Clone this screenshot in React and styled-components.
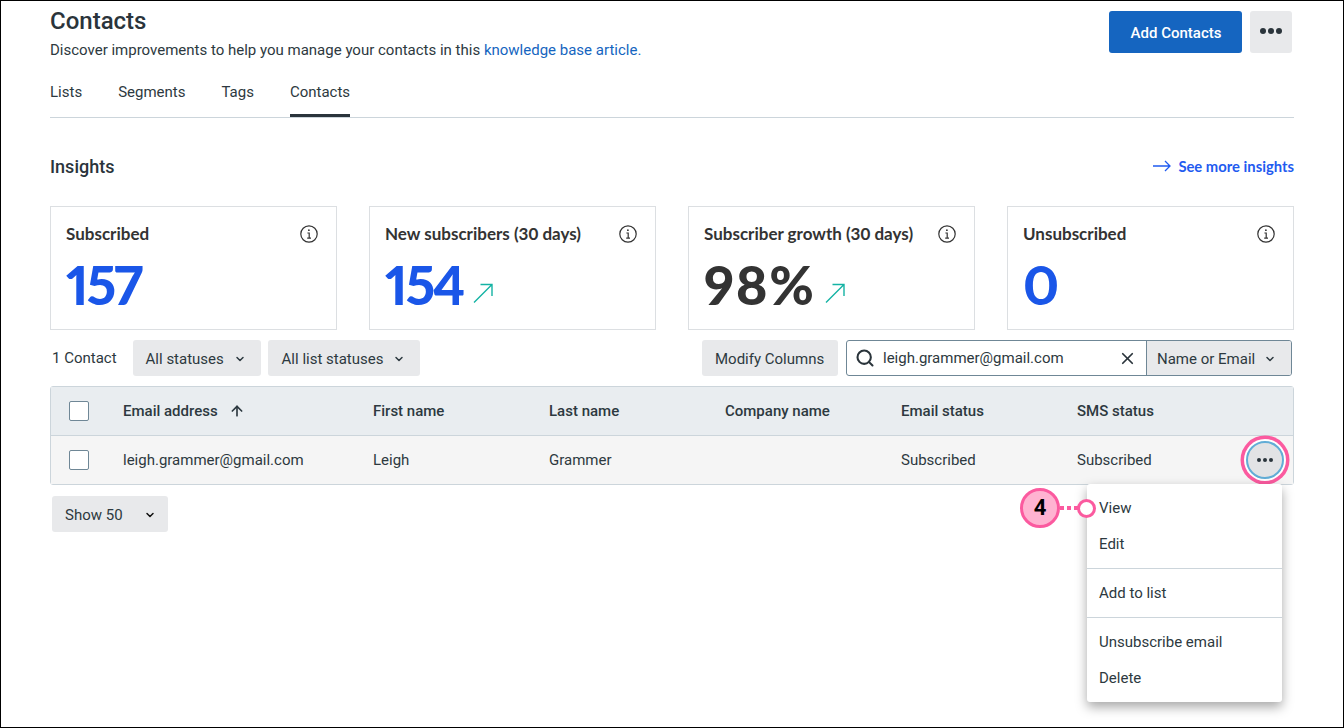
import styled, { createGlobalStyle } from 'styled-components';
import { ChevronDown, Search, X, ArrowUp } from 'lucide-react';

const GlobalStyle = createGlobalStyle`
  html, body {
    margin: 0;
    padding: 0;
    background: #fff;
  }
  body {
    font-family: Roboto, "Liberation Sans", sans-serif;
    color: #2d3940;
  }
  * {
    box-sizing: border-box;
  }
`;

const Frame = styled.div`
  width: 1344px;
  height: 728px;
  border: 1px solid #000;
  padding: 0 49px;
  overflow: hidden;
`;

const TopRow = styled.header`
  display: flex;
  justify-content: space-between;
  align-items: flex-start;
  padding-right: 2px;
`;

const TitleBlock = styled.div`
  padding-top: 6px;
`;

const Title = styled.h1`
  margin: 0;
  font-size: 24px;
  line-height: 28px;
  font-weight: 500;
  color: #2a343b;
`;

const Subtitle = styled.p`
  margin: 5px 0 0;
  font-size: 15px;
  line-height: 20px;

  > a {
    color: #1565c0;
    text-decoration: none;
  }
`;

const TopActions = styled.div`
  display: flex;
  gap: 8px;
  margin-top: 10px;
`;

const PrimaryButton = styled.button`
  width: 133px;
  height: 42px;
  padding: 2px 0 0 1px;
  border: none;
  border-radius: 3px;
  background: #1565c0;
  color: #fff;
  font: 500 15px Roboto, sans-serif;
`;

const MoreButton = styled.button`
  width: 42px;
  height: 42px;
  border: none;
  border-radius: 3px;
  background: #e8e9eb;
  display: flex;
  align-items: center;
  justify-content: center;
  padding: 0 0 2px;
`;

const Tabs = styled.nav`
  display: flex;
  gap: 36px;
  margin-top: 16px;
  border-bottom: 1px solid #ccd5db;
`;

const Tab = styled.a`
  font-size: 15px;
  line-height: 30px;
  padding: 1px 0 7px;
  border-bottom: 3px solid ${(p) => (p.$active ? '#2a343b' : 'transparent')};
`;

const InsightsHead = styled.div`
  display: flex;
  justify-content: space-between;
  align-items: center;
  margin-top: 37px;
  height: 24px;
`;

const SectionTitle = styled.h2`
  margin: 0;
  font-size: 18px;
  line-height: 24px;
  font-weight: 500;
  color: #2a343b;
`;

const SeeMore = styled.a`
  display: flex;
  align-items: center;
  gap: 7px;
  margin-top: -3px;
  font: 700 14.8px Lato, sans-serif;
  color: #1f5bf0;
`;

const Cards = styled.section`
  display: grid;
  grid-template-columns: repeat(4, 287px);
  gap: 32px;
  margin-top: 27px;
`;

const Card = styled.div`
  height: 124px;
  border: 1px solid #dcdfe2;
  padding: 15px 18px 0 15px;
  font-family: Lato, sans-serif;
  color: #333;
`;

const CardHead = styled.div`
  display: flex;
  justify-content: space-between;
  align-items: center;
  height: 24px;
  font-size: 17px;
  font-weight: 700;

  > span {
    margin-top: -2px;
  }
`;

const CardValue = styled.div`
  display: flex;
  align-items: flex-end;
  gap: 10px;
  margin-top: 9px;
  font-size: 54px;
  line-height: 60px;
  font-weight: 900;
  font-variant-numeric: proportional-nums;
  letter-spacing: ${(p) => (p.$dark ? '1.6px' : '-2.2px')};
  color: ${(p) => (p.$dark ? '#333' : '#1a56e8')};

  > svg {
    margin-bottom: 12px;
  }
`;

const Toolbar = styled.div`
  display: flex;
  align-items: center;
  margin-top: 10px;
  padding: 0 2px;
  height: 36px;
`;

const Count = styled.span`
  font-size: 15px;
  margin-right: 16px;
`;

const GreyButton = styled.button`
  display: flex;
  align-items: center;
  justify-content: space-between;
  width: ${(p) => p.$width}px;
  height: 36px;
  margin-right: ${(p) => p.$gap || 0}px;
  padding: 1px ${(p) => p.$right || 14}px 0 ${(p) => p.$left || 14}px;
  border: none;
  border-radius: 3px;
  background: #e8e9eb;
  color: #2d3940;
  font: 400 15px Roboto, sans-serif;
  white-space: nowrap;
`;

const Spacer = styled.div`
  flex: 1;
`;

const SearchGroup = styled.div`
  display: flex;
  width: 446px;
  height: 36px;
  border: 1px solid #6f8796;
  border-radius: 3px;
  overflow: hidden;
`;

const SearchField = styled.div`
  display: flex;
  align-items: center;
  width: 299px;
  padding: 0 9px 0 8px;
  font-size: 15px;

  > span {
    flex: 1;
    margin-left: 8px;
  }
`;

const SearchType = styled.div`
  flex: 1;
  display: flex;
  align-items: center;
  justify-content: space-between;
  padding: 1px 15px 0 10px;
  background: #e8e9eb;
  border-left: 1px solid #6f8796;
  font-size: 15px;
`;

const Table = styled.div`
  position: relative;
  margin-top: 10px;
  border: 1px solid #ccd5db;
  border-radius: 3px;
`;

const Row = styled.div`
  display: grid;
  grid-template-columns: 72px 250px 176px 176px 176px 176px 1fr;
  align-items: center;
  font-size: 15px;
  font-weight: ${(p) => (p.$head ? 500 : 400)};
  background: ${(p) => (p.$head ? '#e9edf0' : '#f5f5f5')};
  border-bottom: ${(p) => (p.$head ? '1px solid #ccd5db' : 'none')};
  height: ${(p) => (p.$head ? 49 : 48)}px;
`;

const Check = styled.span`
  display: block;
  width: 20px;
  height: 20px;
  margin-left: 18px;
  background: #fff;
  border: 1px solid #6f8796;
  border-radius: 2px;
`;

const HeadLabel = styled.span`
  display: flex;
  align-items: center;
  gap: 11px;
`;

const ActionCell = styled.div`
  display: flex;
  justify-content: space-between;
  align-items: center;
`;

const RowAction = styled.button`
  width: 38px;
  height: 38px;
  margin-right: 9px;
  padding: 0;
  display: flex;
  align-items: center;
  justify-content: center;
  background: #e2e3e5;
  border: 2px solid #62add6;
  border-radius: 50%;
  box-shadow: 0 0 0 2px #fff, 0 0 0 5.5px #fb5a9f;
`;

const Menu = styled.div`
  position: absolute;
  top: 97px;
  right: 11px;
  width: 195px;
  padding: 6px 0;
  background: #fff;
  border-radius: 3px;
  box-shadow: 0 5px 12px rgba(0, 0, 0, 0.35);
  font-size: 15px;
  z-index: 2;
`;

const MenuItem = styled.div`
  height: 36px;
  line-height: 36px;
  padding: 0 12px;
`;

const MenuLine = styled.div`
  height: 1px;
  margin: 6px 0;
  background: #ccd5db;
`;

const Callout = styled.div`
  position: absolute;
  top: 4px;
  left: -67px;
  display: flex;
  align-items: center;
`;

const CalloutBadge = styled.span`
  width: 40px;
  height: 40px;
  border: 3.5px solid #fb5a9f;
  border-radius: 50%;
  background: #ffb3d1;
  color: #000;
  font: 700 22px/33px Roboto, sans-serif;
  text-align: center;
`;

const CalloutDots = styled.span`
  width: 18px;
  height: 4px;
  background: repeating-linear-gradient(90deg, #fb5a9f 0 4px, transparent 4px 7px);
`;

const CalloutPin = styled.span`
  width: 19px;
  height: 19px;
  margin-left: -1px;
  border: 3.5px solid #fb5a9f;
  border-radius: 50%;
  background: #fff;
`;

const Pager = styled.div`
  margin: 11px 0 0 2px;
`;

const Dots = ({ r = 3, gap = 8, color = '#2a343b' }) => (
  <svg width={gap * 2 + r * 2} height={r * 2} viewBox={`0 0 ${gap * 2 + r * 2} ${r * 2}`}>
    <circle cx={r} cy={r} r={r} fill={color} />
    <circle cx={r + gap} cy={r} r={r} fill={color} />
    <circle cx={r + gap * 2} cy={r} r={r} fill={color} />
  </svg>
);

const InfoIcon = () => (
  <svg width="18" height="18" viewBox="0 0 18 18" fill="none" stroke="#333" strokeWidth="1.2">
    <circle cx="9" cy="9" r="8.2" />
    <path d="M7.4 8h1.8v5M7.2 13.2h3.8" />
    <circle cx="8.9" cy="5.2" r="0.9" fill="#333" stroke="none" />
  </svg>
);

const TrendIcon = () => (
  <svg width="20" height="20" viewBox="0 0 20 20" fill="none" stroke="#14b3a4" strokeWidth="1.4">
    <path d="M1 19.5L19 1.5M7.5 1.5H19V13" />
  </svg>
);

const LongArrow = () => (
  <svg width="18" height="12" viewBox="0 0 18 12" fill="none" stroke="#1f5bf0" strokeWidth="1.3">
    <path d="M0 6h17M12 1l5 5-5 5" />
  </svg>
);

const Caret = ({ color = '#2d3940', size = 12 }) => <ChevronDown size={size} strokeWidth={3} color={color} />;

const cards = [
  { title: 'Subscribed', value: '157' },
  { title: 'New subscribers (30 days)', value: '154', trend: true },
  { title: 'Subscriber growth (30 days)', value: '98%', trend: true, dark: true },
  { title: 'Unsubscribed', value: '0' },
];

const App = () => (
  <>
    <GlobalStyle />
    <Frame>
      <TopRow>
        <TitleBlock>
          <Title>Contacts</Title>
          <Subtitle>
            Discover improvements to help you manage your contacts in this <a href="#kb">knowledge base article.</a>
          </Subtitle>
        </TitleBlock>
        <TopActions>
          <PrimaryButton>Add Contacts</PrimaryButton>
          <MoreButton>
            <Dots />
          </MoreButton>
        </TopActions>
      </TopRow>

      <Tabs>
        <Tab>Lists</Tab>
        <Tab>Segments</Tab>
        <Tab>Tags</Tab>
        <Tab $active>Contacts</Tab>
      </Tabs>

      <InsightsHead>
        <SectionTitle>Insights</SectionTitle>
        <SeeMore>
          <LongArrow />
          See more insights
        </SeeMore>
      </InsightsHead>

      <Cards>
        {cards.map((c) => (
          <Card key={c.title}>
            <CardHead>
              <span>{c.title}</span>
              <InfoIcon />
            </CardHead>
            <CardValue $dark={c.dark}>
              {c.value}
              {c.trend && <TrendIcon />}
            </CardValue>
          </Card>
        ))}
      </Cards>

      <Toolbar>
        <Count>1 Contact</Count>
        <GreyButton $width={128} $gap={7} $left={13} $right={15}>
          All statuses <Caret />
        </GreyButton>
        <GreyButton $width={152} $right={15}>
          All list statuses <Caret />
        </GreyButton>
        <Spacer />
        <GreyButton $width={136} $gap={8} $left={13} $right={13}>
          Modify Columns
        </GreyButton>
        <SearchGroup>
          <SearchField>
            <Search size={20} strokeWidth={2.5} color="#2a343b" />
            <span>leigh.grammer@gmail.com</span>
            <X size={19} strokeWidth={2.2} color="#2a343b" />
          </SearchField>
          <SearchType>
            Name or Email <Caret />
          </SearchType>
        </SearchGroup>
      </Toolbar>

      <Table>
        <Row $head>
          <Check />
          <HeadLabel>
            Email address <ArrowUp size={16} strokeWidth={2.5} />
          </HeadLabel>
          <span>First name</span>
          <span>Last name</span>
          <span>Company name</span>
          <span>Email status</span>
          <span>SMS status</span>
        </Row>
        <Row>
          <Check />
          <span>leigh.grammer@gmail.com</span>
          <span>Leigh</span>
          <span>Grammer</span>
          <span />
          <span>Subscribed</span>
          <ActionCell>
            <span>Subscribed</span>
            <RowAction>
              <Dots r={2} gap={6} />
            </RowAction>
          </ActionCell>
        </Row>
        <Menu>
          <Callout>
            <CalloutBadge>4</CalloutBadge>
            <CalloutDots />
            <CalloutPin />
          </Callout>
          <MenuItem>View</MenuItem>
          <MenuItem>Edit</MenuItem>
          <MenuLine />
          <MenuItem>Add to list</MenuItem>
          <MenuLine />
          <MenuItem>Unsubscribe email</MenuItem>
          <MenuItem>Delete</MenuItem>
        </Menu>
      </Table>

      <Pager>
        <GreyButton $width={116} $left={13} $right={12}>
          Show 50 <Caret color="#111" />
        </GreyButton>
      </Pager>
    </Frame>
  </>
);

export default App;
